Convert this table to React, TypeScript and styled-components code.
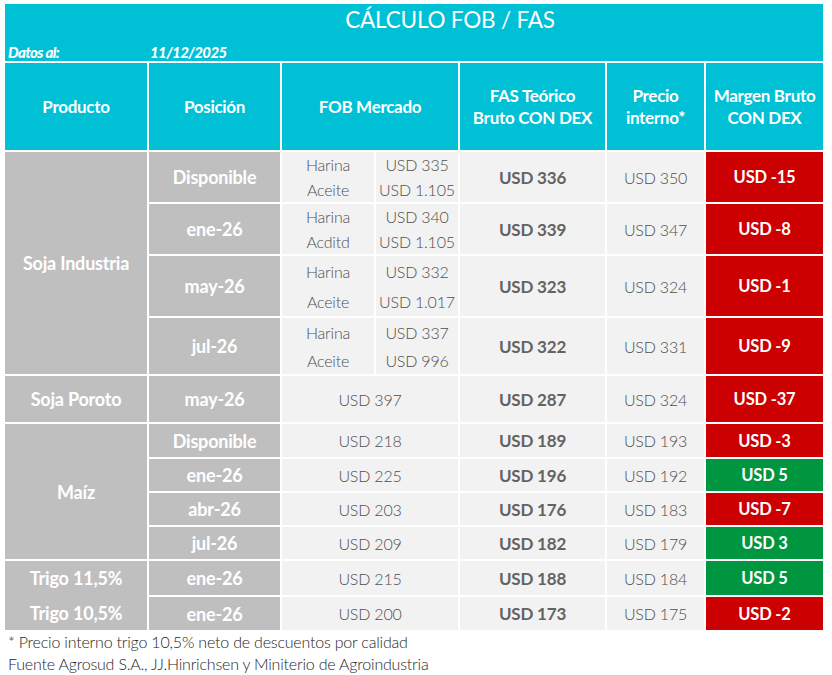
import React from 'react';
import styled, { createGlobalStyle } from 'styled-components';

const CYAN = '#00c0d6';
const GREY = '#bfbfbf';
const LIGHT = '#f2f2f2';
const RED = '#cc0000';
const GREEN = '#009640';
const TEXT = '#4f4f4f';

const GlobalStyle = createGlobalStyle`
  html, body {
    margin: 0;
    padding: 0;
    background: #ffffff;
  }
  body {
    font-family: Lato, "Open Sans", sans-serif;
    -webkit-font-smoothing: antialiased;
  }
`;

const Page = styled.div`
  width: 832px;
  padding: 4px 0 0 5px;
  box-sizing: border-box;
`;

const Table = styled.div`
  display: grid;
  grid-template-columns: 142px 131px 92px 82px 145px 97px 117px;
  grid-template-rows: 57px 87px 50px 50px 60px 56px 46px 33px 32px 32px 32px 34px 33px;
  gap: 2px;
  width: 818px;
  background: #ffffff;
`;

const TitleBlock = styled.div`
  grid-column: 1 / -1;
  background: ${CYAN};
  color: #ffffff;
  display: flex;
  flex-direction: column;
`;

const Title = styled.div`
  font-size: 22.5px;
  font-weight: 400;
  line-height: 30px;
  padding: 1px 0 0 72px;
  text-align: center;
  letter-spacing: -0.2px;
`;

const DateRow = styled.div`
  margin-top: auto;
  display: grid;
  grid-template-columns: 142px auto;
  padding: 0 0 0 3px;
  font-size: 15px;
  font-weight: 900;
  font-style: italic;
  line-height: 18px;
  letter-spacing: -0.6px;
`;

const HeadCell = styled.div<{ $span?: number }>`
  grid-column: span ${p => p.$span ?? 1};
  background: ${CYAN};
  color: #ffffff;
  font-size: 17px;
  font-weight: 700;
  line-height: 22px;
  display: flex;
  align-items: center;
  justify-content: center;
  text-align: center;
  letter-spacing: -0.3px;
`;

const GreyCell = styled.div<{ $rows?: number }>`
  grid-row: span ${p => p.$rows ?? 1};
  background: ${GREY};
  color: #ffffff;
  font-size: 18px;
  font-weight: 700;
  display: flex;
  align-items: center;
  justify-content: center;
  letter-spacing: -0.2px;
`;

const StackCell = styled.div<{ $rows?: number; $dark?: boolean }>`
  grid-row: span ${p => p.$rows ?? 1};
  background: ${p => (p.$dark ? GREY : LIGHT)};
  color: ${p => (p.$dark ? '#ffffff' : TEXT)};
  font-size: ${p => (p.$dark ? 18 : 16)}px;
  font-weight: ${p => (p.$dark ? 700 : 300)};
  display: flex;
  flex-direction: column;
  letter-spacing: -0.2px;
`;

const Half = styled.div`
  flex: 1;
  display: flex;
  align-items: center;
  justify-content: center;
`;

const ValueCell = styled.div<{ $span?: number; $bold?: boolean }>`
  grid-column: span ${p => p.$span ?? 1};
  background: ${LIGHT};
  color: ${p => (p.$bold ? '#636363' : TEXT)};
  font-size: ${p => (p.$bold ? 17 : 16)}px;
  font-weight: ${p => (p.$bold ? 700 : 300)};
  display: flex;
  align-items: center;
  justify-content: center;
  letter-spacing: -0.2px;
`;

const MarginCell = styled.div<{ $positive: boolean }>`
  background: ${p => (p.$positive ? GREEN : RED)};
  color: #ffffff;
  font-size: 16.5px;
  font-weight: 700;
  display: flex;
  align-items: center;
  justify-content: center;
  letter-spacing: -0.2px;
`;

const Footer = styled.div`
  padding: 1px 0 0 3px;
  font-size: 16px;
  font-weight: 300;
  line-height: 22px;
  color: #262626;
  letter-spacing: -0.2px;
`;

type Row = {
  pos: string;
  fob: [string, string][] | string;
  fas: string;
  precio: string;
  margen: number;
};

type Group = { product: string; rows: Row[] };

const groups: Group[] = [
  {
    product: 'Soja Industria',
    rows: [
      { pos: 'Disponible', fob: [['Harina', 'USD 335'], ['Aceite', 'USD 1.105']], fas: 'USD 336', precio: 'USD 350', margen: -15 },
      { pos: 'ene-26', fob: [['Harina', 'USD 340'], ['Acditd', 'USD 1.105']], fas: 'USD 339', precio: 'USD 347', margen: -8 },
      { pos: 'may-26', fob: [['Harina', 'USD 332'], ['Aceite', 'USD 1.017']], fas: 'USD 323', precio: 'USD 324', margen: -1 },
      { pos: 'jul-26', fob: [['Harina', 'USD 337'], ['Aceite', 'USD 996']], fas: 'USD 322', precio: 'USD 331', margen: -9 },
    ],
  },
  {
    product: 'Soja Poroto',
    rows: [{ pos: 'may-26', fob: 'USD 397', fas: 'USD 287', precio: 'USD 324', margen: -37 }],
  },
  {
    product: 'Maíz',
    rows: [
      { pos: 'Disponible', fob: 'USD 218', fas: 'USD 189', precio: 'USD 193', margen: -3 },
      { pos: 'ene-26', fob: 'USD 225', fas: 'USD 196', precio: 'USD 192', margen: 5 },
      { pos: 'abr-26', fob: 'USD 203', fas: 'USD 176', precio: 'USD 183', margen: -7 },
      { pos: 'jul-26', fob: 'USD 209', fas: 'USD 182', precio: 'USD 179', margen: 3 },
    ],
  },
];

// the two trigo rows share one grey product block (no line between them)
const trigo: (Row & { product: string })[] = [
  { product: 'Trigo 11,5%', pos: 'ene-26', fob: 'USD 215', fas: 'USD 188', precio: 'USD 184', margen: 5 },
  { product: 'Trigo 10,5%', pos: 'ene-26', fob: 'USD 200', fas: 'USD 173', precio: 'USD 175', margen: -2 },
];

const RowCells: React.FC<{ row: Row }> = ({ row }) => (
  <>
    <GreyCell>{row.pos}</GreyCell>
    {typeof row.fob === 'string' ? (
      <ValueCell $span={2}>{row.fob}</ValueCell>
    ) : (
      <>
        <StackCell>
          {row.fob.map(([label]) => (
            <Half key={label}>{label}</Half>
          ))}
        </StackCell>
        <StackCell>
          {row.fob.map(([label, value]) => (
            <Half key={label}>{value}</Half>
          ))}
        </StackCell>
      </>
    )}
    <ValueCell $bold>{row.fas}</ValueCell>
    <ValueCell>{row.precio}</ValueCell>
    <MarginCell $positive={row.margen > 0}>USD {row.margen}</MarginCell>
  </>
);

export default function App() {
  return (
    <Page>
      <GlobalStyle />
      <Table>
        <TitleBlock>
          <Title>CÁLCULO FOB / FAS</Title>
          <DateRow>
            <span>Datos al:</span>
            <span>11/12/2025</span>
          </DateRow>
        </TitleBlock>

        <HeadCell>Producto</HeadCell>
        <HeadCell>Posición</HeadCell>
        <HeadCell $span={2}>FOB Mercado</HeadCell>
        <HeadCell>FAS Teórico<br />Bruto CON DEX</HeadCell>
        <HeadCell>Precio<br />interno*</HeadCell>
        <HeadCell>Margen Bruto<br />CON DEX</HeadCell>

        {groups.map(g => (
          <React.Fragment key={g.product}>
            <GreyCell $rows={g.rows.length}>{g.product}</GreyCell>
            {g.rows.map((r, i) => (
              <RowCells key={i} row={r} />
            ))}
          </React.Fragment>
        ))}

        <StackCell $rows={2} $dark>
          {trigo.map(t => (
            <Half key={t.product}>{t.product}</Half>
          ))}
        </StackCell>
        {trigo.map(t => (
          <RowCells key={t.product} row={t} />
        ))}
      </Table>
      <Footer>
        * Precio interno trigo 10,5% neto de descuentos por calidad
        <br />
        Fuente Agrosud S.A., JJ.Hinrichsen y Miniterio de Agroindustria
      </Footer>
    </Page>
  );
}
